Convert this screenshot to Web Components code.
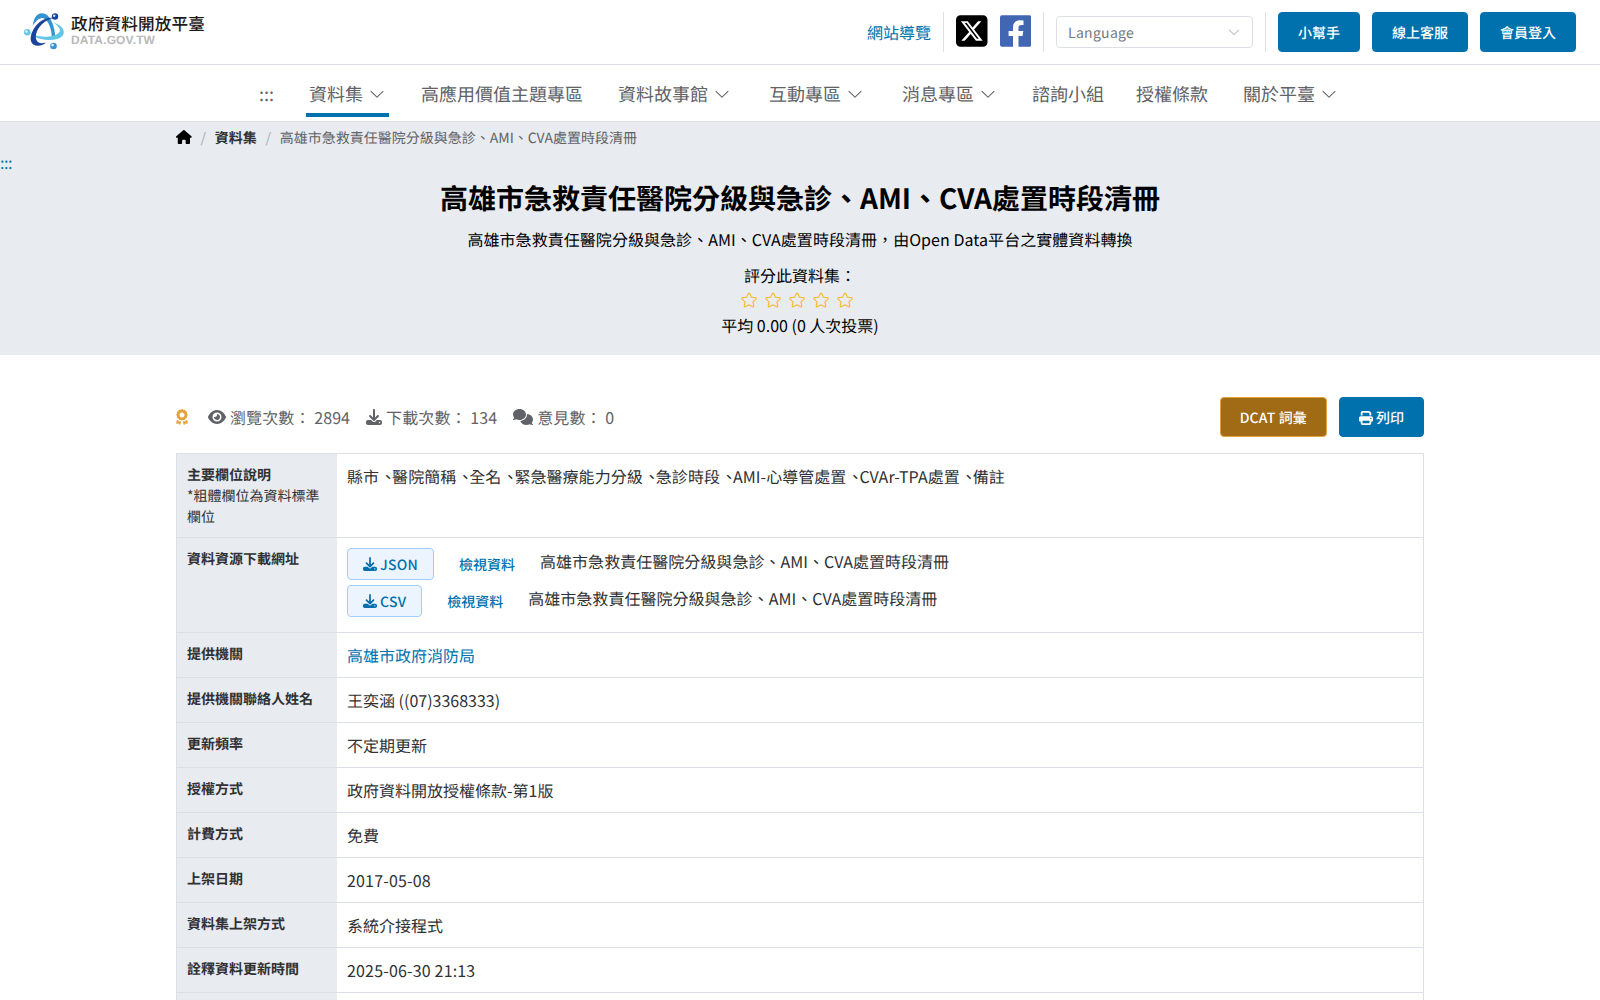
<!DOCTYPE html>
<html lang="zh-Hant-TW">
<head>
<meta charset="utf-8">
<title>高雄市急救責任醫院分級與急診、AMI、CVA處置時段清冊 | 政府資料開放平臺</title>
<style>
  html { overflow: hidden; }
  body {
    margin: 0;
    height: 1000px;
    overflow: hidden;
    font-family: "Noto Sans CJK TC", "Noto Sans", sans-serif;
    font-size: 16px;
    line-height: 24px;
    text-rendering: geometricPrecision;
    color: #303133;
    background: #fff;
    --primary: #0071ad;
    --line: #dcdfe6;
    --grey: #e8ebf0;
    --muted: #606266;
  }
  .num { letter-spacing: .17px; }
</style>
</head>
<body>
<gov-header></gov-header>
<gov-nav>
  <gov-nav-item lead>:::</gov-nav-item>
  <gov-nav-item active arrow>資料集</gov-nav-item>
  <gov-nav-item>高應用價值主題專區</gov-nav-item>
  <gov-nav-item arrow>資料故事館</gov-nav-item>
  <gov-nav-item arrow style="--before: 32px">互動專區</gov-nav-item>
  <gov-nav-item arrow style="--before: 32px">消息專區</gov-nav-item>
  <gov-nav-item>諮詢小組</gov-nav-item>
  <gov-nav-item style="--before: 26px">授權條款</gov-nav-item>
  <gov-nav-item arrow>關於平臺</gov-nav-item>
</gov-nav>
<dataset-hero section="資料集" average="平均 0.00 (0 人次投票)">
  <span slot="title">高雄市急救責任醫院分級與急診、AMI、CVA處置時段清冊</span>
  <span slot="description">高雄市急救責任醫院分級與急診、AMI、CVA處置時段清冊，由Open Data平台之實體資料轉換</span>
</dataset-hero>
<dataset-stats views="2894" downloads="134" comments="0"></dataset-stats>
<dataset-table>
  <dataset-row label="主要欄位說明" note="*粗體欄位為資料標準欄位"><field-list fields="縣市,醫院簡稱,全名,緊急醫療能力分級,急診時段,AMI-心導管處置,CVAr-TPA處置,備註"></field-list></dataset-row>
  <dataset-row label="資料資源下載網址">
    <resource-link format="JSON">高雄市急救責任醫院分級與急診、AMI、CVA處置時段清冊</resource-link>
    <resource-link format="CSV">高雄市急救責任醫院分級與急診、AMI、CVA處置時段清冊</resource-link>
  </dataset-row>
  <dataset-row label="提供機關"><span style="color: var(--primary)">高雄市政府消防局</span></dataset-row>
  <dataset-row label="提供機關聯絡人姓名">王奕涵 ((07)3368333)</dataset-row>
  <dataset-row label="更新頻率">不定期更新</dataset-row>
  <dataset-row label="授權方式">政府資料開放授權條款-第1版</dataset-row>
  <dataset-row label="計費方式">免費</dataset-row>
  <dataset-row label="上架日期"><span class="num">2017-05-08</span></dataset-row>
  <dataset-row label="資料集上架方式">系統介接程式</dataset-row>
  <dataset-row label="詮釋資料更新時間"><span class="num">2025-06-30 21:13</span></dataset-row>
  <dataset-row label=""></dataset-row>
</dataset-table>

<script>
const ICONS = {
  home: ['0 0 576 512', 'M575.8 255.5c0 18-15 32.1-32 32.1h-32l.7 160.2c0 2.7-.2 5.4-.5 8.1V472c0 22.1-17.9 40-40 40H392c-22.1 0-40-17.9-40-40V384c0-17.7-14.3-32-32-32H256c-17.7 0-32 14.3-32 32v88c0 22.1-17.9 40-40 40H104c-22.1 0-40-17.9-40-40V287.6H32c-18 0-32-14-32-32.1c0-9 3-17 10-24L266.4 8c7-7 15-8 22-8s15 2 21 7L564.8 231.5c8 7 12 15 11 24z'],
  award: ['0 0 384 512', 'M192 0l46 20 50 2 26 42 38 32 2 48 22 42-22 42-4 48-38 30-26 40-48 4-46 20-46-20-48-4-26-40-38-30-4-48-22-42 22-42 2-48 38-32 26-42 50-2zM192 108a80 80 0 1 0 .1 0zM28 340l34 14 30 42 50-2 28 12-34 96-14 10-38-52-62 10-18-16zM356 340l-34 14-30 42-50-2-28 12 34 96 14 10 38-52 62 10 18-16z'],
  eye: ['0 0 576 512', 'M288 32c-80.8 0-145.5 36.8-192.6 80.6C48.6 156 17.3 208 2.5 243.7c-3.3 7.9-3.3 16.7 0 24.6C17.3 304 48.6 356 95.4 399.4C142.5 443.2 207.2 480 288 480s145.5-36.8 192.6-80.6c46.8-43.5 78.1-95.4 93-131.1c3.3-7.9 3.3-16.7 0-24.6c-14.9-35.7-46.2-87.7-93-131.1C433.5 68.8 368.8 32 288 32zM144 256a144 144 0 1 1 288 0 144 144 0 1 1 -288 0zm144-64c0 35.3-28.7 64-64 64c-7.1 0-13.9-1.2-20.3-3.3c-5.5-1.8-11.9 1.6-11.7 7.4c.3 6.9 1.3 13.8 3.2 20.7c13.7 51.2 66.4 81.6 117.6 67.9s81.6-66.4 67.9-117.6c-11.1-41.5-47.8-69.4-88.6-71.1c-5.8-.2-9.2 6.1-7.4 11.7c2.1 6.4 3.3 13.2 3.3 20.3z'],
  download: ['0 0 512 512', 'M288 32c0-17.7-14.3-32-32-32s-32 14.3-32 32V274.7l-73.4-73.4c-12.5-12.5-32.8-12.5-45.3 0s-12.5 32.8 0 45.3l128 128c12.5 12.5 32.8 12.5 45.3 0l128-128c12.5-12.5 12.5-32.8 0-45.3s-32.8-12.5-45.3 0L288 274.7V32zM64 352c-35.3 0-64 28.7-64 64v32c0 35.3 28.7 64 64 64H448c35.3 0 64-28.7 64-64V416c0-35.3-28.7-64-64-64H346.5l-45.3 45.3c-25 25-65.5 25-90.5 0L165.5 352H64zm368 56a24 24 0 1 1 0 48 24 24 0 1 1 0-48z'],
  comments: ['0 0 640 512', 'M208 352c114.9 0 208-78.8 208-176S322.9 0 208 0S0 78.8 0 176c0 38.6 14.7 74.3 39.6 103.4c-3.5 9.4-8.7 17.7-14.2 24.7c-4.8 6.2-9.7 11-13.3 14.3c-1.8 1.6-3.3 2.9-4.3 3.7c-.5 .4-.9 .7-1.1 .8l-.2 .2C1 327.2-1.4 334.4 .8 340.9S9.1 352 16 352c21.8 0 43.8-5.6 62.1-12.5c9.2-3.5 17.8-7.4 25.2-11.4C134.1 343.3 169.8 352 208 352zM448 176c0 112.3-99.1 196.9-216.5 207C255.8 457.4 336.4 512 432 512c38.2 0 73.9-8.7 104.7-23.9c7.5 4 16 7.9 25.2 11.4c18.3 6.9 40.3 12.5 62.1 12.5c6.9 0 13.1-4.5 15.2-11.1c2.1-6.6-.2-13.8-5.8-17.9l-.2-.2c-.2-.2-.6-.4-1.1-.8c-1-.8-2.5-2-4.3-3.7c-3.6-3.3-8.5-8.1-13.3-14.3c-5.5-7-10.7-15.4-14.2-24.7c24.9-29 39.6-64.7 39.6-103.4c0-92.8-84.9-168.9-192.6-175.5c.4 5.1 .6 10.3 .6 15.5z'],
  print: ['0 0 512 512', 'M128 0C92.7 0 64 28.7 64 64v96h64V64H354.7L384 93.3V160h64V93.3c0-17-6.7-33.3-18.7-45.3L400 18.7C388 6.7 371.7 0 354.7 0H128zM384 352v96H128V352H384zm64 32h32c17.7 0 32-14.3 32-32V256c0-35.3-28.7-64-64-64H64c-35.3 0-64 28.7-64 64v96c0 17.7 14.3 32 32 32H64v64c0 35.3 28.7 64 64 64H384c35.3 0 64-28.7 64-64V384zM432 248a24 24 0 1 1 0 48 24 24 0 1 1 0-48z'],
  x: ['0 0 448 512', 'M64 32C28.7 32 0 60.7 0 96V416c0 35.3 28.7 64 64 64H384c35.3 0 64-28.7 64-64V96c0-35.3-28.7-64-64-64H64zm297.1 84L257.3 234.6 379.4 396H283.8L209 298.1 123.3 396H75.8l111-126.9L69.7 116h98l67.7 89.5L313.6 116h47.5zM323.3 367.6L153.4 142.9H125.1L296.9 367.6h26.3z'],
  facebook: ['0 0 448 512', 'M420 32H28A28 28 0 0 0 0 60v392a28 28 0 0 0 28 28h157.25V327.69h-63V256h63v-54.64c0-62.15 37-96.48 93.67-96.48 27.14 0 55.52 4.84 55.52 4.84v61h-31.27c-30.81 0-40.42 19.12-40.42 38.73V256h68.78l-11 71.69h-57.78V480H420a28 28 0 0 0 28-28V60a28 28 0 0 0-28-28z'],
  arrow: ['0 0 1024 1024', 'M831.872 340.864 512 652.672 192.128 340.864a30.592 30.592 0 0 0-42.752 0 29.12 29.12 0 0 0 0 41.6L489.664 714.24a32 32 0 0 0 44.672 0l340.288-331.712a29.12 29.12 0 0 0 0-41.728 30.592 30.592 0 0 0-42.752 0z'],
  star: ['0 0 1024 1024', 'm512 747.84 228.16 119.936a6.4 6.4 0 0 0 9.28-6.72l-43.52-254.08 184.512-179.904a6.4 6.4 0 0 0-3.52-10.88l-255.104-37.12L517.76 147.904a6.4 6.4 0 0 0-11.52 0L392.192 379.072l-255.104 37.12a6.4 6.4 0 0 0-3.52 10.88L318.08 606.976l-43.584 254.08a6.4 6.4 0 0 0 9.28 6.72zM313.6 924.48a70.4 70.4 0 0 1-102.144-74.24l37.888-220.928L88.96 472.96A70.4 70.4 0 0 1 128 352.896l221.76-32.256 99.2-200.96a70.4 70.4 0 0 1 126.208 0l99.2 200.96 221.824 32.256a70.4 70.4 0 0 1 39.04 120.064L774.72 629.376l37.888 220.8a70.4 70.4 0 0 1-102.144 74.24L512 820.096l-198.4 104.32z']
};

class GovElement extends HTMLElement {
  constructor() {
    super();
    this.attachShadow({ mode: "open" });
  }
  connectedCallback() {
    this.shadowRoot.innerHTML = this.render();
  }
}

customElements.define("gov-icon", class extends GovElement {
  render() {
    const [box, path] = ICONS[this.getAttribute("name")];
    return `
      <style>
        :host { display: inline-flex; flex: none; }
        svg { display: block; height: 1em; width: auto; fill: currentColor; }
        :host([name=award]) svg, :host([name=star]) svg { fill-rule: evenodd; }
      </style>
      <svg viewBox="${box}" height="16" style="aspect-ratio: ${box.split(" ")[2]} / ${box.split(" ")[3]}"><path d="${path}"/></svg>`;
  }
});

customElements.define("gov-button", class extends GovElement {
  render() {
    return `
      <style>
        :host {
          display: inline-flex;
          align-items: center;
          justify-content: center;
          gap: 3px;
          box-sizing: border-box;
          height: 40px;
          padding: 1px 19px 0;
          border: 1px solid var(--primary);
          border-radius: 4px;
          background: var(--primary);
          color: #fff;
          font-size: 14px;
          font-weight: 500;
          line-height: 14px;
          white-space: nowrap;
        }
        :host([type=warning]) { background: #a16a15; border-color: #e6a23c; letter-spacing: .15px; }
        :host([type=plain]) {
          height: 32px;
          padding: 0 15px;
          background: #ecf5ff;
          border-color: #a0cfff;
          color: var(--primary);
          letter-spacing: .25px;
        }
        :host([type=plain]) span { padding-top: 1px; }
      </style>
      <slot name="icon"></slot><span><slot></slot></span>`;
  }
});

customElements.define("gov-logo", class extends GovElement {
  render() {
    return `
      <style>
        :host { display: flex; align-items: center; gap: 7px; }
        svg { display: block; }
        .text { margin-top: -6px; }
        .name { font-size: 16.6px; line-height: 20px; font-weight: 500; color: #231815; letter-spacing: .15px; white-space: nowrap; }
        .domain { font: bold 12px/12px "Liberation Sans", sans-serif; color: #b9b9b9; letter-spacing: .15px; margin-top: 1px; }
      </style>
      <svg width="40" height="38" viewBox="0 0 40 38">
        <path fill="#3494d2" d="M8.800 12.500C10 4 13 .2 18 .2c8 0 12.800 12 13.600 25.500L28 26.500C28 17 24.500 7 19.500 5.200 15 4.500 12 8.500 8.800 12.500z"/>
        <path fill="#63c6e6" d="M5.500 18.800C9 22.500 17 24.500 25 23.500c8.500-1 12.500-4.500 10.300-8.200C33.500 12.500 31.500 10.800 29.500 9.500c6 1.800 10.300 5.500 10.300 9.800C39.800 25 32 27.300 24 27 15 26.500 8 23.500 5.500 18.800z"/>
        <path fill="#1a449b" d="M29.500 5C21 6.500 13.500 14 12 21.500c-1 5.500 1.500 8.500 5.500 8.800 1.500 0 3-.3 4.500-.8-2.500 2.500-6 3.500-9 3.200C6.500 32 5.300 26 8 19.500 11.500 11 20 3.800 29.500 5z"/>
        <circle cx="31" cy="3.500" r="3.200" fill="#1a449b"/><circle cx="30.200" cy="2.700" r="1.200" fill="#dbe7f5"/>
        <circle cx="3.200" cy="19.300" r="3.200" fill="#63c6e6"/><circle cx="2.400" cy="18.500" r="1.200" fill="#eefaff"/>
        <circle cx="29.500" cy="33" r="3.300" fill="#3494d2"/><circle cx="28.600" cy="32.100" r="1.300" fill="#e5f3fb"/>
      </svg>
      <div class="text">
        <div class="name">政府資料開放平臺</div>
        <div class="domain">DATA.GOV.TW</div>
      </div>`;
  }
});

customElements.define("gov-header", class extends GovElement {
  render() {
    return `
      <style>
        :host {
          display: flex;
          align-items: center;
          justify-content: space-between;
          height: 64px;
          padding: 0 24px;
          border-bottom: 1px solid var(--line);
        }
        .tools { display: flex; align-items: center; gap: 12px; }
        .sitemap { color: var(--primary); }
        .divider { width: 1px; height: 40px; background: var(--line); }
        .social { font-size: 36px; margin-top: -3px; }
        .facebook { color: #4267b2; }
        .x { color: #000; }
        .select {
          display: flex;
          align-items: center;
          justify-content: space-between;
          box-sizing: border-box;
          width: 197px;
          height: 32px;
          padding: 0 11px;
          border: 1px solid var(--line);
          border-radius: 4px;
          font-size: 14px;
          color: #757781;
          letter-spacing: .3px;
        }
        .select span { padding-top: 2px; }
        .select gov-icon { color: #a8abb2; }
      </style>
      <gov-logo></gov-logo>
      <div class="tools">
        <span class="sitemap">網站導覽</span>
        <span class="divider"></span>
        <gov-icon class="social x" name="x"></gov-icon>
        <gov-icon class="social facebook" name="facebook"></gov-icon>
        <span class="divider"></span>
        <div class="select"><span>Language</span><gov-icon name="arrow"></gov-icon></div>
        <span class="divider"></span>
        <gov-button>小幫手</gov-button>
        <gov-button>線上客服</gov-button>
        <gov-button>會員登入</gov-button>
      </div>`;
  }
});

customElements.define("gov-nav", class extends GovElement {
  render() {
    return `
      <style>
        :host {
          display: flex;
          box-sizing: border-box;
          height: 57px;
          padding-left: 256px;
          border-bottom: 1px solid var(--line);
        }
      </style>
      <slot></slot>`;
  }
});

customElements.define("gov-nav-item", class extends GovElement {
  render() {
    return `
      <style>
        :host {
          display: flex;
          align-items: center;
          gap: 5px;
          box-sizing: border-box;
          height: 52px;
          padding: 9px 3px 0;
          margin-left: var(--before, 29px);
          border-bottom: 4px solid transparent;
          font-size: 18px;
          color: var(--muted);
          white-space: nowrap;
        }
        :host([lead]) { margin-left: 0; width: 21px; padding-right: 0; }
        :host([active]) { border-color: var(--primary); }
      </style>
      <slot></slot>${this.hasAttribute("arrow") ? `<gov-icon name="arrow"></gov-icon>` : ""}`;
  }
});

customElements.define("dataset-hero", class extends GovElement {
  render() {
    return `
      <style>
        :host { display: block; box-sizing: border-box; height: 233px; background: var(--grey); color: #000; text-align: center; }
        .crumbs {
          display: flex;
          align-items: center;
          height: 30px;
          margin: 0 176px;
          font-size: 14px;
          color: var(--muted);
        }
        .crumbs gov-icon { color: #000; }
        .crumbs b { color: #303133; }
        .crumbs b, .crumbs span { padding-top: 2px; }
        .crumbs .sep { width: 23px; color: #a8abb2; }
        .anchor { height: 20px; line-height: 20px; text-align: left; color: var(--primary); letter-spacing: -.4px; }
        h1 { margin: 5px 0 0; font-size: 28px; line-height: 42px; }
        p { margin: 8px 0 0; letter-spacing: .05px; }
        .rate { margin-top: 12px; }
        .stars { display: flex; justify-content: center; align-items: center; height: 26px; font-size: 18px; color: #f7ba2a; }
        .stars gov-icon { margin-right: 6px; }
      </style>
      <div class="crumbs">
        <gov-icon name="home"></gov-icon><span class="sep">/</span>
        <b>${this.getAttribute("section")}</b><span class="sep">/</span>
        <span>高雄市急救責任醫院分級與急診、AMI、CVA處置時段清冊</span>
      </div>
      <div class="anchor">:::</div>
      <h1><slot name="title"></slot></h1>
      <p><slot name="description"></slot></p>
      <div class="rate">評分此資料集：</div>
      <div class="stars">${`<gov-icon name="star"></gov-icon>`.repeat(5)}</div>
      <div>${this.getAttribute("average")}</div>`;
  }
});

customElements.define("dataset-stats", class extends GovElement {
  render() {
    const item = (icon, label, key) =>
      `<span class="item"><gov-icon name="${icon}"></gov-icon><span>${label}： ${this.getAttribute(key)}</span></span>`;
    return `
      <style>
        :host { display: flex; align-items: center; gap: 16px; height: 40px; margin: 42px 176px 16px; color: var(--muted); }
        .award { color: #e6a23c; margin-right: 4px; }
        .item { display: flex; align-items: center; gap: 4px; letter-spacing: .1px; }
        .actions { display: flex; gap: 12px; margin-left: auto; }
      </style>
      <gov-icon class="award" name="award"></gov-icon>
      ${item("eye", "瀏覽次數", "views")}
      ${item("download", "下載次數", "downloads")}
      ${item("comments", "意見數", "comments")}
      <div class="actions">
        <gov-button type="warning">DCAT 詞彙</gov-button>
        <gov-button><gov-icon slot="icon" name="print"></gov-icon>列印</gov-button>
      </div>`;
  }
});

customElements.define("dataset-table", class extends GovElement {
  render() {
    return `
      <style>
        :host { display: block; margin: 0 176px; border: 1px solid var(--line); }
      </style>
      <slot></slot>`;
  }
});

customElements.define("dataset-row", class extends GovElement {
  render() {
    const note = this.getAttribute("note");
    return `
      <style>
        :host { display: flex; min-height: 44px; border-bottom: 1px solid var(--line); }
        .label {
          flex: none;
          box-sizing: border-box;
          width: 160px;
          padding: 11px 10px 9px;
          background: var(--grey);
          font-size: 14px;
          line-height: 21px;
        }
        .label b { display: block; }
        .value { flex: 1; padding: 10px; }
      </style>
      <div class="label"><b>${this.getAttribute("label")}</b>${note || ""}</div>
      <div class="value"><slot></slot></div>`;
  }
});

customElements.define("field-list", class extends GovElement {
  render() {
    return `
      <style>
        :host { display: block; }
        i { margin-left: 1.3px; font-style: normal; font-feature-settings: "halt"; }
        .fields { letter-spacing: .05px; }
      </style>
      <div class="fields">${this.getAttribute("fields").split(",").join(" <i>、</i>")}</div>`;
  }
});

customElements.define("resource-link", class extends GovElement {
  render() {
    return `
      <style>
        :host { display: flex; height: 32px; margin-bottom: 5px; }
        .view { margin: 0 25px; font-size: 14px; font-weight: 500; line-height: 34px; color: var(--primary); }
        .name { line-height: 27px; letter-spacing: .03px; }
      </style>
      <gov-button type="plain"><gov-icon slot="icon" name="download"></gov-icon>${this.getAttribute("format")}</gov-button>
      <span class="view">檢視資料</span>
      <span class="name"><slot></slot></span>`;
  }
});
</script>
</body>
</html>
